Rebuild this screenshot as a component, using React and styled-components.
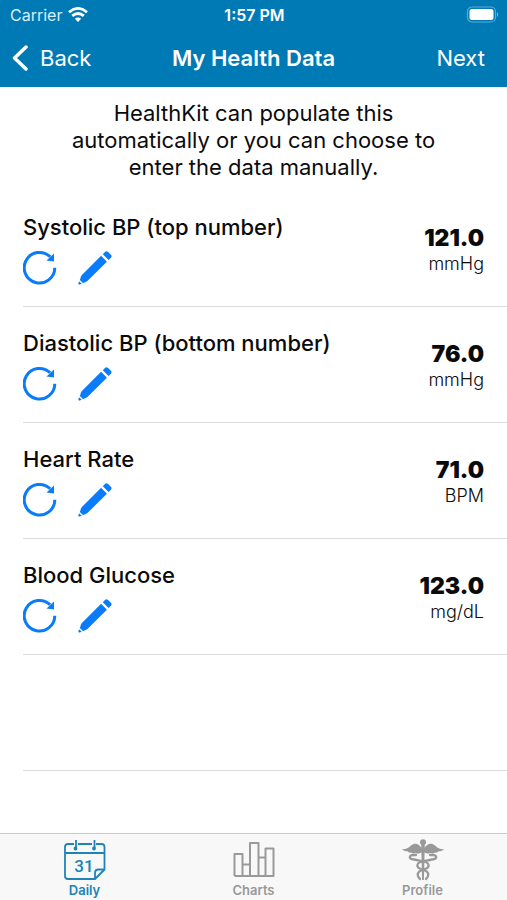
import React from "react";
import styled, { createGlobalStyle } from "styled-components";

const GlobalStyle = createGlobalStyle`
  *, *::before, *::after { box-sizing: border-box; }
  body {
    margin: 0;
    background: #fff;
    color: #0b0b0b;
    font-family: Inter, "Liberation Sans", sans-serif;
  }
  button { font: inherit; color: inherit; background: none; border: 0; padding: 0; cursor: pointer; }
  svg { display: block; }
`;

const Screen = styled.div`
  min-height: 100vh;
  display: flex;
  flex-direction: column;
`;

const Header = styled.header`
  background: #007ab5;
  color: #fff;
`;

const ThreeColumns = styled.div`
  display: grid;
  grid-template-columns: 1fr auto 1fr;
  align-items: center;
`;

const StatusBar = styled(ThreeColumns)`
  height: 29px;
  padding: 0 8px 0 10px;
  font-size: 16px;
  line-height: 20px;
`;

const Carrier = styled.div`
  display: flex;
  align-items: center;
  gap: 6px;
  color: #d9edf7;
`;

const Clock = styled.time`
  font-weight: 600;
`;

const Battery = styled.div`
  justify-self: end;
`;

const NavBar = styled(ThreeColumns)`
  height: 58px;
  padding: 0 22px 0 12px;
  font-size: 22px;
  line-height: 28px;
`;

const NavButton = styled.button`
  display: flex;
  align-items: center;
  gap: 12px;
  justify-self: ${({ $end }) => ($end ? "end" : "start")};
`;

const Title = styled.h1`
  margin: 0;
  padding-left: 10px;
  font-size: 22px;
  line-height: 28px;
  font-weight: 600;
`;

const Main = styled.main`
  flex: 1;
`;

const Intro = styled.p`
  margin: 0 auto;
  padding: 13px 0 10px;
  max-width: 380px;
  font-size: 22px;
  line-height: 27px;
  text-align: center;
`;

const List = styled.ul`
  list-style: none;
  margin: 0;
  padding: 0 0 0 23px;
`;

const Row = styled.li`
  display: flex;
  justify-content: space-between;
  min-height: 116px;
  padding: 22px 23px 0 0;
  border-bottom: 1px solid #dedede;
`;

const Label = styled.h2`
  margin: 0;
  font-size: 22px;
  line-height: 28px;
  font-weight: 500;
`;

const Actions = styled.div`
  display: flex;
  gap: 19px;
  margin-top: 9px;
`;

const ActionButton = styled.button`
  width: 36px;
  height: 36px;
  color: #087cfb;
`;

const Reading = styled.div`
  padding-top: 11px;
  text-align: right;
`;

const Value = styled.div`
  font-size: 23px;
  line-height: 28px;
  font-weight: 900;
`;

const Unit = styled.div`
  font-size: 18px;
  line-height: 24px;
  font-weight: 300;
`;

const TabBar = styled.nav`
  display: grid;
  grid-template-columns: repeat(3, 1fr);
  height: 67px;
  background: #f8f8f8;
  border-top: 1px solid #c9c9c9;
`;

const Tab = styled.button`
  display: flex;
  flex-direction: column;
  align-items: center;
  padding-top: 5px;
  gap: 1px;
  color: ${({ $active }) => ($active ? "#2083b7" : "#999")};
  font-size: 13px;
  line-height: 16px;
  font-weight: 600;
`;

const WifiIcon = () => (
  <svg width="20" height="15" viewBox="0 0 20 15" fill="none" stroke="#fff" strokeWidth="2.8" aria-hidden="true">
    <path d="M1 5.2Q10-2.4 19 5.2" />
    <path d="M4.2 8.9Q10 4 15.8 8.9" />
    <path d="M10 15L6.8 11.8Q10 9 13.2 11.8Z" fill="#fff" stroke="none" />
  </svg>
);

const BatteryIcon = () => (
  <svg width="33" height="17" viewBox="0 0 33 17" aria-hidden="true">
    <rect x="1.500" y="1" width="28" height="15" rx="4.5" fill="none" stroke="#5ca9cf" strokeWidth="1.2" />
    <rect x="3.500" y="3" width="24" height="11" rx="2.5" fill="#fff" />
    <path d="M31 6Q33.200 8.5 31 11Z" fill="#7fbcd9" />
  </svg>
);

const BackIcon = () => (
  <svg width="16" height="26" viewBox="0 0 16 26" fill="none" stroke="#fff" strokeWidth="3.5" strokeLinecap="round" strokeLinejoin="round" aria-hidden="true">
    <path d="M14 2L2.5 13L14 24" />
  </svg>
);

const RefreshIcon = () => (
  <svg width="36" height="36" viewBox="0 0 36 36" aria-hidden="true">
    <path d="M31.8 17.8A15.3 15.3 0 1 1 27.2 6.8" fill="none" stroke="currentColor" strokeWidth="3" />
    <path d="M31 3.5V11.500L23.500 10.5Z" fill="currentColor" />
  </svg>
);

const PencilIcon = () => (
  <svg width="36" height="36" viewBox="0 0 36 36" fill="currentColor" aria-hidden="true">
    <path d="M23.100 5.8L28.9 11.700L9.7 30.800Q8.500 32 6.4 32.4L1.8 34.4Q-.1 35 .4 33L2.4 28.5Q2.700 26.4 3.900 25.100Z" />
    <path d="M1 30.200L5 34.100" stroke="#fff" strokeWidth="1.4" />
    <path d="M24.800 4.2L27.2 1.7Q28.500 .6 29.800 1.8L33.1 5.100Q34.200 6.300 33.1 7.5L30.600 10Z" />
  </svg>
);

const CalendarIcon = () => (
  <svg width="42" height="42" viewBox="0 0 42 42" fill="none" stroke="currentColor" strokeWidth="1.8" strokeLinejoin="round" aria-hidden="true">
    <path d="M10 5H4Q1 5 1 8V37Q1 40 4 40H31L40.500 30.500V8Q40.500 5 37.500 5H32M14 5H28" />
    <path d="M1 14H40.500M12 1V9M30.500 1V9M31 40V34Q31 30.500 34.500 30.500H40.500" />
    <circle cx="11.500" cy="9.500" r="1" fill="currentColor" />
    <circle cx="30" cy="9.500" r="1" fill="currentColor" />
    <text x="20" y="33" textAnchor="middle" fontFamily="Roboto, sans-serif" fontSize="17" fontWeight="500" fill="currentColor" stroke="none">31</text>
  </svg>
);

const ChartIcon = () => (
  <svg width="42" height="42" viewBox="0 0 42 42" fill="none" stroke="currentColor" strokeWidth="2" strokeLinejoin="round" aria-hidden="true">
    <path d="M1.500 37V15H9.500V37M9.500 25.500H17V37M17 37V4H25.500V37M25.500 18.500H32.500M32.500 37V9.500H40.500V37ZH1.500" />
  </svg>
);

const CaduceusIcon = () => (
  <svg width="42" height="42" viewBox="0 0 42 42" aria-hidden="true">
    <g fill="currentColor">
      <circle cx="21" cy="3.200" r="3" />
      <path d="M20 9.500C17 5 13 3 9 6.500C7 8.500 4 10.400 0 10.300C1.500 12 4 12.400 5.500 12.300C6 13.300 7.800 13.900 9 13.500C10 14.700 12 14.700 13 14.100C15 15 18 14.500 20 13ZM22 9.500C25 5 29 3 33 6.500C35 8.500 38 10.400 42 10.300C40.500 12 38 12.400 36.500 12.300C36 13.300 34.200 13.900 33 13.500C32 14.700 30 14.700 29 14.100C27 15 24 14.500 22 13Z" />
      <path d="M19.200 6H22.800L21.900 41H20.100Z" />
    </g>
    <g fill="none" stroke="currentColor" strokeWidth="2.300" strokeLinecap="round">
      <path d="M14 16H11.500C6.500 16 6.500 20 12 20.500L22 22.500C28.500 24.500 27.500 28.500 23 30L19 31.500C14.500 33.500 15 37.500 18 40" />
      <path d="M28 16H30.500C35.500 16 35.500 20 30 20.500L20 22.500C13.500 24.500 14.500 28.500 19 30L23 31.500C27.500 33.500 27 37.500 24 40" />
    </g>
  </svg>
);

const readings = [
  { label: "Systolic BP (top number)", value: "121.0", unit: "mmHg" },
  { label: "Diastolic BP (bottom number)", value: "76.0", unit: "mmHg" },
  { label: "Heart Rate", value: "71.0", unit: "BPM" },
  { label: "Blood Glucose", value: "123.0", unit: "mg/dL" },
];

const tabs = [
  { label: "Daily", Icon: CalendarIcon, active: true },
  { label: "Charts", Icon: ChartIcon },
  { label: "Profile", Icon: CaduceusIcon },
];

export default function App() {
  return (
    <Screen>
      <GlobalStyle />
      <Header>
        <StatusBar>
          <Carrier>Carrier <WifiIcon /></Carrier>
          <Clock>1:57 PM</Clock>
          <Battery><BatteryIcon /></Battery>
        </StatusBar>
        <NavBar>
          <NavButton type="button"><BackIcon />Back</NavButton>
          <Title>My Health Data</Title>
          <NavButton type="button" $end>Next</NavButton>
        </NavBar>
      </Header>
      <Main>
        <Intro>HealthKit can populate this automatically or you can choose to enter the data manually.</Intro>
        <List>
          {readings.map(({ label, value, unit }) => (
            <Row key={label}>
              <div>
                <Label>{label}</Label>
                <Actions>
                  <ActionButton type="button" aria-label={`Refresh ${label}`}><RefreshIcon /></ActionButton>
                  <ActionButton type="button" aria-label={`Edit ${label}`}><PencilIcon /></ActionButton>
                </Actions>
              </div>
              <Reading>
                <Value>{value}</Value>
                <Unit>{unit}</Unit>
              </Reading>
            </Row>
          ))}
          <Row aria-hidden="true" />
        </List>
      </Main>
      <TabBar>
        {tabs.map(({ label, Icon, active }) => (
          <Tab key={label} type="button" $active={active} aria-current={active ? "page" : undefined}>
            <Icon />
            {label}
          </Tab>
        ))}
      </TabBar>
    </Screen>
  );
}
